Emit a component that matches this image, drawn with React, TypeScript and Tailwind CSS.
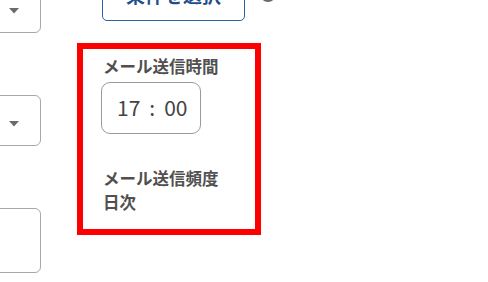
import React from "react";

function SelectBox({ h }: { h: string }) {
  return (
    <div
      className={`w-[200px] ml-[-159px] ${h} border border-[#a8a8a8] rounded-[6px] bg-white flex items-center justify-end pr-[21px] pt-[6px]`}
    >
      <svg width="10" height="6" viewBox="0 0 10 6">
        <path d="M0 0 L10 0 L5 5.5 Z" fill="#6b6b6b" />
      </svg>
    </div>
  );
}

export default function App() {
  return (
    <div
      className="w-[488px] h-[282px] overflow-hidden bg-white flex"
      style={{ fontFamily: '"Noto Sans CJK JP", "Noto Sans", sans-serif' }}
    >
      <div className="w-[41px] shrink-0 flex flex-col mt-[-18px]">
        <SelectBox h="h-[51px] shrink-0" />
        <div className="mt-[62px]">
          <SelectBox h="h-[51px] shrink-0" />
        </div>
        <div className="mt-[62px] w-[200px] ml-[-159px] h-[65px] shrink-0 border border-[#a8a8a8] rounded-[6px] bg-white" />
      </div>

      <div className="ml-[36px] flex flex-col mt-[-27px]">
        <div className="flex items-start ml-[25px]">
          <button className="w-[143px] h-[48px] border border-[#2a62a6] rounded-[5px] bg-white text-[#1f4f8a] font-bold text-[19px] leading-none flex items-center justify-center pb-[6px]">
            条件を選択
          </button>
          <div className="ml-[15px] mt-[13px] w-[16px] h-[16px] rounded-full bg-[#6a6a6a]" />
        </div>

        <div className="mt-[22px] w-[184px] h-[192px] border-[6px] border-[#ff0000] pl-[18px] pt-[5px] flex flex-col">
          <div className="text-[16.5px] leading-[24px] font-bold text-[#505050] pl-[2px]">
            メール送信時間
          </div>
          <div className="mt-[4px] w-[100px] h-[52px] border border-[#9a9a9a] rounded-[9px] flex items-center pl-[15px] text-[21px] text-[#444444]">
            <span>17</span>
            <span className="ml-[9px]">:</span>
            <span className="ml-[9px]">00</span>
          </div>
          <div className="mt-[32px] text-[16.5px] leading-[24px] font-bold text-[#505050] pl-[2px]">
            メール送信頻度
          </div>
          <div className="text-[16.5px] leading-[24px] font-bold text-[#505050] pl-[2px]">
            日次
          </div>
        </div>
      </div>
    </div>
  );
}
